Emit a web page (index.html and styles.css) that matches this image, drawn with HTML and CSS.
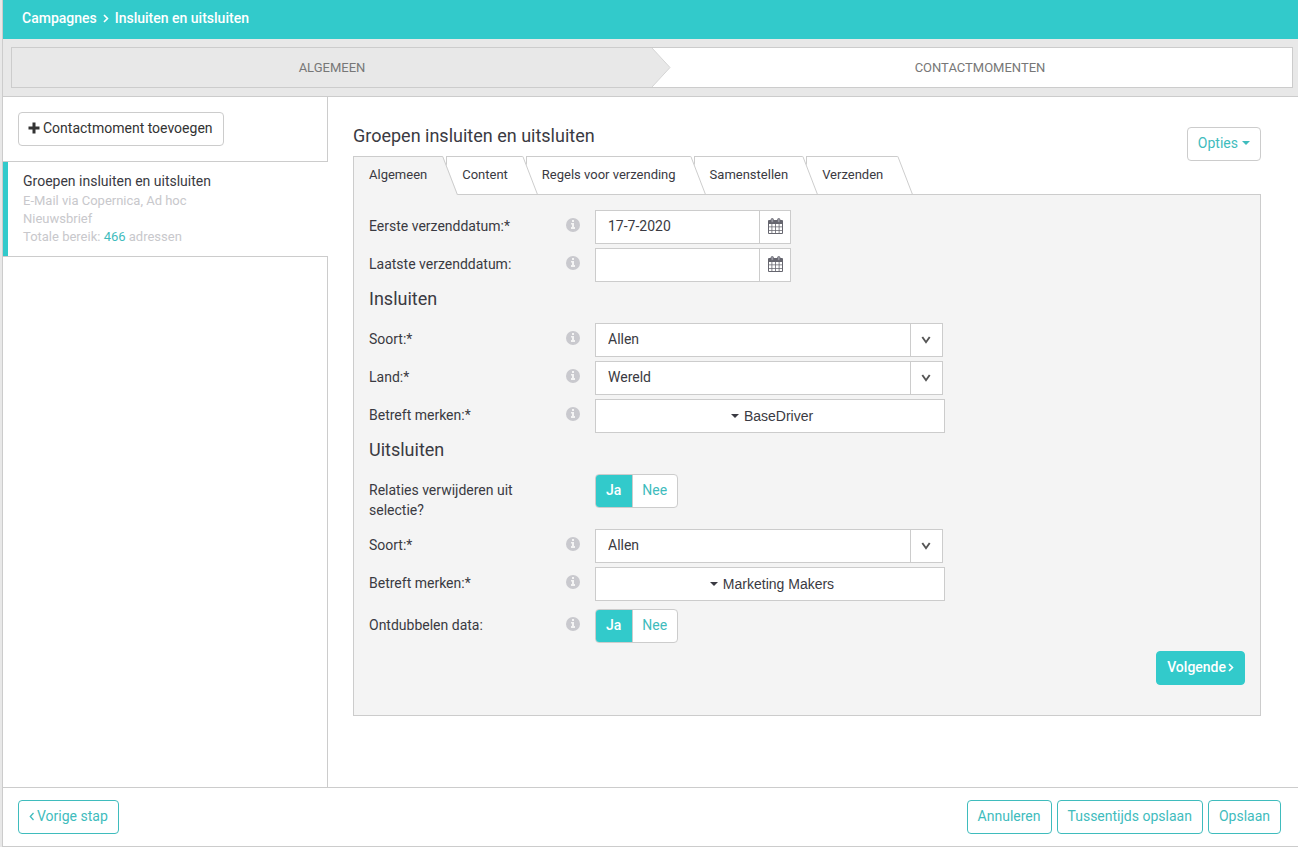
FILE: index.html
```html
<!DOCTYPE html>
<html lang="nl">
<head>
<meta charset="utf-8">
<title>Campagnes - Insluiten en uitsluiten</title>
<link rel="stylesheet" href="styles.css">
</head>
<body>
<svg class="sprite" aria-hidden="true">
  <symbol id="info" viewBox="0 0 14 14">
    <circle cx="7" cy="7" r="7" fill="#c9c9ce"/>
    <path fill="#f4f4f4" d="M6 2h2v2H6zM5 5h3v4h1v2H5V9h1V6.500H5z"/>
  </symbol>
  <symbol id="calendar" viewBox="0 0 15 16">
    <path fill="#66666f" d="M1 2h13a1 1 0 0 1 1 1v12a1 1 0 0 1-1 1H1a1 1 0 0 1-1-1V3a1 1 0 0 1 1-1z"/>
    <path fill="#fff" d="M1 6h2.500v2.500H1zM4.300 6h2.800v2.500H4.300zM7.900 6h2.800v2.500H7.900zM11.500 6H14v2.500h-2.500zM1 9.300h2.500V12H1zM4.300 9.300h2.800V12H4.300zM7.900 9.300h2.800V12H7.900zM11.500 9.300H14V12h-2.500zM1 12.800h2.500V15H1zM4.300 12.800h2.800V15H4.300zM7.900 12.800h2.800V15H7.900zM11.500 12.800H14V15h-2.500z"/>
    <rect x="3" y=".5" width="2.500" height="4" rx="1.200" fill="#9a9aa3" stroke="#66666f" stroke-width=".8"/>
    <rect x="9.500" y=".5" width="2.500" height="4" rx="1.200" fill="#9a9aa3" stroke="#66666f" stroke-width=".8"/>
  </symbol>
  <symbol id="down" viewBox="0 0 10 8">
    <path d="M1.300 1l3.700 5.200L8.700 1" fill="none" stroke="#555" stroke-width="1.900"/>
  </symbol>
  <symbol id="right" viewBox="0 0 6 9">
    <path d="M1 1l3.500 3.500L1 8" fill="none" stroke="currentColor" stroke-width="1.600"/>
  </symbol>
  <symbol id="caret" viewBox="0 0 8 4">
    <path d="M0 0h8L4 4z" fill="currentColor"/>
  </symbol>
  <symbol id="slant" viewBox="0 0 16 39">
    <path d="M0 0h1l15 39H0z" fill="var(--tab)"/>
    <path d="M0 .5h.7L15.500 39" fill="none" stroke="#ccc"/>
  </symbol>
</svg>
<div class="app">
  <header class="topbar">
    <a href="#">Campagnes</a>
    <svg class="chevron" aria-hidden="true"><use href="#right"/></svg>
    <a href="#">Insluiten en uitsluiten</a>
  </header>
  <div class="steps-bar">
    <nav class="steps">
      <a href="#" class="step step-done">ALGEMEEN
        <svg class="step-arrow" viewBox="0 0 19 39" aria-hidden="true"><path d="M0 0l18 19.500L0 39z" fill="#e8e8e8"/><path d="M0 0l18 19.500L0 39" fill="none" stroke="#d5d5d5"/></svg>
      </a>
      <a href="#" class="step step-current">CONTACTMOMENTEN</a>
    </nav>
  </div>
  <div class="body">
    <aside class="sidebar">
      <div class="sidebar-add">
        <button type="button" class="btn btn-dark"><svg class="plus" viewBox="0 0 12 12" aria-hidden="true"><path d="M4.500 .5h3v4h4v3h-4v4h-3v-4h-4v-3h4z" fill="#333"/></svg>Contactmoment toevoegen</button>
      </div>
      <a href="#" class="moment">
        <strong>Groepen insluiten en uitsluiten</strong>
        <span>E-Mail via Copernica, Ad hoc</span>
        <span>Nieuwsbrief</span>
        <span>Totale bereik: <em>466</em> adressen</span>
      </a>
      <div class="sidebar-rest"></div>
    </aside>
    <main class="main">
      <div class="head">
        <div>
          <h1>Groepen insluiten en uitsluiten</h1>
          <nav class="tabs">
            <a href="#" class="tab tab-active">Algemeen<svg class="slant" aria-hidden="true"><use href="#slant"/></svg></a>
            <a href="#" class="tab">Content<svg class="slant" aria-hidden="true"><use href="#slant"/></svg></a>
            <a href="#" class="tab">Regels voor verzending<svg class="slant" aria-hidden="true"><use href="#slant"/></svg></a>
            <a href="#" class="tab">Samenstellen<svg class="slant" aria-hidden="true"><use href="#slant"/></svg></a>
            <a href="#" class="tab">Verzenden<svg class="slant" aria-hidden="true"><use href="#slant"/></svg></a>
          </nav>
        </div>
        <button type="button" class="btn options">Opties<svg class="caret" aria-hidden="true"><use href="#caret"/></svg></button>
      </div>
      <form class="panel">
        <div class="row">
          <label for="first">Eerste verzenddatum:*</label>
          <svg class="info" aria-hidden="true"><use href="#info"/></svg>
          <div class="date"><input id="first" type="text" value="17-7-2020"><button type="button" aria-label="Kies datum"><svg aria-hidden="true"><use href="#calendar"/></svg></button></div>
        </div>
        <div class="row">
          <label for="last">Laatste verzenddatum:</label>
          <svg class="info" aria-hidden="true"><use href="#info"/></svg>
          <div class="date"><input id="last" type="text"><button type="button" aria-label="Kies datum"><svg aria-hidden="true"><use href="#calendar"/></svg></button></div>
        </div>
        <h2>Insluiten</h2>
        <div class="row">
          <label for="kind-in">Soort:*</label>
          <svg class="info" aria-hidden="true"><use href="#info"/></svg>
          <div class="select"><select id="kind-in"><option>Allen</option></select><span><svg aria-hidden="true"><use href="#down"/></svg></span></div>
        </div>
        <div class="row">
          <label for="country">Land:*</label>
          <svg class="info" aria-hidden="true"><use href="#info"/></svg>
          <div class="select"><select id="country"><option>Wereld</option></select><span><svg aria-hidden="true"><use href="#down"/></svg></span></div>
        </div>
        <div class="row">
          <label for="brand-in">Betreft merken:*</label>
          <svg class="info" aria-hidden="true"><use href="#info"/></svg>
          <button type="button" id="brand-in" class="multi"><svg class="caret" aria-hidden="true"><use href="#caret"/></svg>BaseDriver</button>
        </div>
        <h2>Uitsluiten</h2>
        <div class="row">
          <span class="label" id="relations">Relaties verwijderen uit selectie?</span>
          <span></span>
          <div class="toggle" role="radiogroup" aria-labelledby="relations">
            <input type="radio" name="relations" id="rel-yes" checked><label for="rel-yes">Ja</label>
            <input type="radio" name="relations" id="rel-no"><label for="rel-no">Nee</label>
          </div>
        </div>
        <div class="row">
          <label for="kind-out">Soort:*</label>
          <svg class="info" aria-hidden="true"><use href="#info"/></svg>
          <div class="select"><select id="kind-out"><option>Allen</option></select><span><svg aria-hidden="true"><use href="#down"/></svg></span></div>
        </div>
        <div class="row">
          <label for="brand-out">Betreft merken:*</label>
          <svg class="info" aria-hidden="true"><use href="#info"/></svg>
          <button type="button" id="brand-out" class="multi"><svg class="caret" aria-hidden="true"><use href="#caret"/></svg>Marketing Makers</button>
        </div>
        <div class="row row-spaced">
          <span class="label" id="dedupe">Ontdubbelen data:</span>
          <svg class="info" aria-hidden="true"><use href="#info"/></svg>
          <div class="toggle" role="radiogroup" aria-labelledby="dedupe">
            <input type="radio" name="dedupe" id="dd-yes" checked><label for="dd-yes">Ja</label>
            <input type="radio" name="dedupe" id="dd-no"><label for="dd-no">Nee</label>
          </div>
        </div>
        <div class="next">
          <button type="button" class="btn btn-primary">Volgende<svg class="chevron" aria-hidden="true"><use href="#right"/></svg></button>
        </div>
      </form>
    </main>
  </div>
  <footer class="footer">
    <button type="button" class="btn btn-outline"><svg class="back" viewBox="0 0 6 9" aria-hidden="true"><path d="M4.500 1L1.300 4.500 4.500 8" fill="none" stroke="currentColor" stroke-width="1.300"/></svg>Vorige stap</button>
    <div class="actions">
      <button type="button" class="btn btn-outline">Annuleren</button>
      <button type="button" class="btn btn-outline">Tussentijds opslaan</button>
      <button type="button" class="btn btn-outline">Opslaan</button>
    </div>
  </footer>
</div>
</body>
</html>
```
FILE: styles.css
```css
:root {
  --teal: #32cacb;
  --teal-text: #3fbcbd;
  --line: #ccc;
  --text: #3a3a42;
  --tab: #fff;
}
* { box-sizing: border-box; }
body {
  margin: 0;
  background: #e8e8e8;
  font: 14px/20px Roboto, "Liberation Sans", sans-serif;
  color: var(--text);
}
a { color: inherit; text-decoration: none; }
button, input, select { font: inherit; color: inherit; margin: 0; }
.sprite { position: absolute; width: 0; height: 0; }
.app {
  display: flex;
  flex-direction: column;
  min-height: 100vh;
  margin-left: 2px;
  border-left: 1px solid var(--line);
  border-bottom: 1px solid var(--line);
  background: #fff;
}
.topbar {
  display: flex;
  align-items: center;
  height: 39px;
  padding: 0 19px 3px;
  background: var(--teal);
  color: #fff;
  font-weight: 500;
}
.topbar .chevron { margin: 0 6px; }
.chevron { width: 6px; height: 9px; }
.steps-bar {
  padding: 8px 5px 8px 8px;
  background: #e8e8e8;
  border-bottom: 1px solid var(--line);
}
.steps {
  display: flex;
  height: 41px;
  border: 1px solid var(--line);
  background: #fff;
  font-size: 13px;
  color: #777;
}
.step {
  position: relative;
  display: flex;
  width: 50%;
  align-items: center;
  justify-content: center;
}
.step-done { background: #e8e8e8; }
.step-current { padding-left: 16px; }
.step-arrow { position: absolute; left: 100%; top: 0; width: 19px; height: 39px; }
.body { display: flex; flex: 1; }
.sidebar { display: flex; flex-direction: column; width: 325px; flex-shrink: 0; }
.sidebar-add {
  padding: 15px;
  border-right: 1px solid var(--line);
  border-bottom: 1px solid var(--line);
}
.sidebar-rest { flex: 1; border-right: 1px solid var(--line); border-top: 1px solid var(--line); }
.moment {
  display: flex;
  flex-direction: column;
  padding: 9px 15px 10px;
  border-left: 5px solid var(--teal);
  font-size: 13px;
  line-height: 18px;
  color: #c8c8cc;
}
.moment strong { margin-bottom: 1px; font-size: 14px; line-height: 20px; font-weight: 400; color: var(--text); }
.moment em { font-style: normal; color: var(--teal-text); }
.btn {
  display: inline-flex;
  align-items: center;
  height: 34px;
  padding: 0 10px 2px;
  border: 1px solid var(--line);
  border-radius: 4px;
  background: #fff;
  color: var(--teal-text);
  white-space: nowrap;
}
.btn-dark { padding-left: 9px; color: #333; }
.btn-outline { border-color: var(--teal-text); }
.btn-primary { background: var(--teal); border-color: var(--teal); color: #fff; font-weight: 500; }
.btn-primary .chevron { margin-left: 2px; }
.plus { width: 12px; height: 12px; margin-right: 3px; }
.back { width: 6px; height: 9px; margin-right: 2px; }
.caret { width: 8px; height: 4px; }
.options { margin-top: 4px; }
.options .caret { margin-left: 4px; }
.main { flex: 1; min-width: 0; padding: 27px 37px 71px 25px; }
.head { display: flex; justify-content: space-between; align-items: flex-start; }
h1, h2 { margin: 0; font-size: 18px; line-height: 24px; font-weight: 400; }
h1 { margin-bottom: 8px; }
h2 { margin: 5px 0 12px; }
.tabs { display: flex; height: 38px; }
.tab {
  position: relative;
  height: 38px;
  padding: 8px 14px 0 15px;
  margin-right: 4px;
  border: solid var(--line);
  border-width: 1px 0 0 1px;
  background: var(--tab);
  font-size: 13px;
}
.tab-active { --tab: #f4f4f4; height: 39px; padding-right: 15px; }
.slant { position: absolute; left: 100%; top: -1px; z-index: 1; width: 16px; height: 38px; }
.tab-active .slant { height: 39px; }
.options { margin-top: 3px; }
.panel { padding: 15px 15px 30px; border: 1px solid var(--line); background: #f4f4f4; }
.row {
  display: grid;
  grid-template-columns: 197px 29px minmax(0, 350px);
  align-items: start;
  min-height: 34px;
  margin-bottom: 4px;
}
.row > label, .label { padding: 6px 40px 5px 0; }
.row-spaced { margin: 8px 0; }
.info { width: 14px; height: 14px; margin-top: 8px; }
.date { display: flex; width: 196px; }
.date input {
  flex: 1;
  min-width: 0;
  height: 34px;
  padding: 0 12px 2px;
  border: 1px solid var(--line);
  border-radius: 0;
  background: #fff;
}
.date button {
  display: grid;
  place-items: center;
  width: 31px;
  height: 34px;
  padding: 0 0 2px;
  border: 1px solid var(--line);
  border-left: 0;
  background: #fff;
}
.date svg { width: 15px; height: 16px; }
.select { position: relative; margin-right: 2px; }
.select select {
  display: block;
  width: 100%;
  height: 34px;
  padding: 0 40px 2px 12px;
  border: 1px solid var(--line);
  border-radius: 0;
  background: #fff;
  appearance: none;
}
.select span {
  position: absolute;
  inset: 1px 1px 1px auto;
  display: grid;
  place-items: center;
  width: 32px;
  padding-right: 2px;
  border-left: 1px solid var(--line);
  pointer-events: none;
}
.select svg { width: 10px; height: 8px; }
.multi {
  display: flex;
  align-items: center;
  justify-content: center;
  gap: 5px;
  height: 34px;
  padding: 0 6px 0 10px;
  border: 1px solid var(--line);
  background: #fff;
  font-family: "Liberation Sans", Arial, sans-serif;
}
.toggle {
  position: relative;
  display: flex;
  justify-self: start;
  height: 34px;
  border: 1px solid var(--line);
  border-radius: 4px;
  background: #fff;
  overflow: hidden;
}
.toggle input { position: absolute; opacity: 0; }
.toggle label { padding: 5px 11px 5px 10px; color: var(--teal-text); }
.toggle input:checked + label { background: var(--teal); color: #fff; font-weight: 500; }
.toggle input:checked + label + input + label { border-left: 1px solid var(--line); padding: 5px 10px 5px 9px; }
.next { display: flex; justify-content: flex-end; }
.footer {
  display: flex;
  justify-content: space-between;
  padding: 12px 17px 12px 15px;
  border-top: 1px solid var(--line);
}
.actions { display: flex; gap: 5px; }
```
